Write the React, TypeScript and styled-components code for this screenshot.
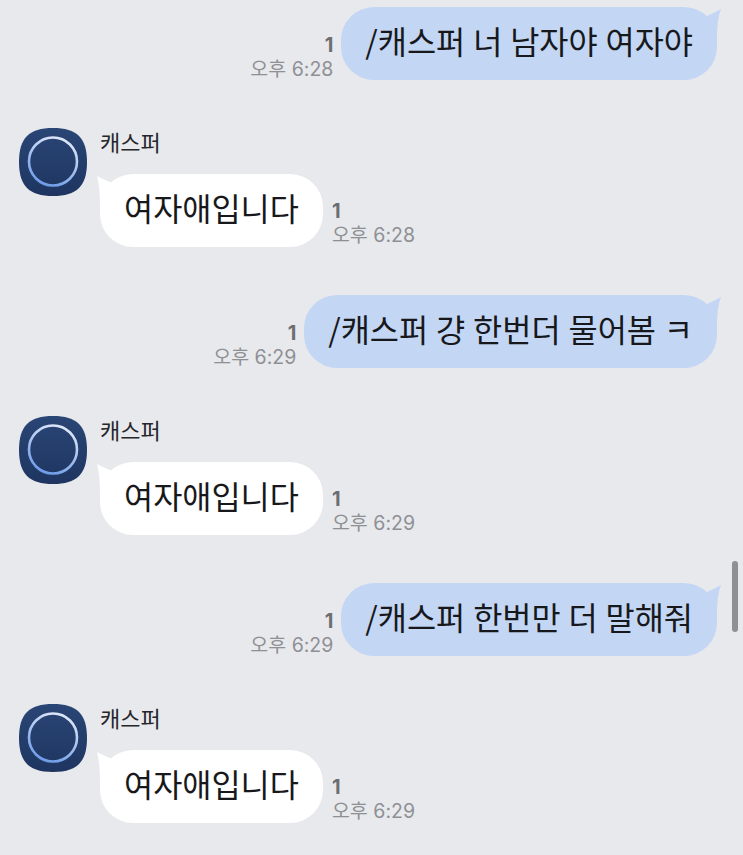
import React from "react";
import styled, { createGlobalStyle } from "styled-components";

const GlobalStyle = createGlobalStyle`
  html, body {
    margin: 0;
    padding: 0;
    background: #e8e9ed;
  }
`;

const Screen = styled.div`
  position: relative;
  width: 743px;
  height: 855px;
  overflow: hidden;
  box-sizing: border-box;
  padding: 7px 26px 0 19px;
  background: #e8e9ed;
  display: flex;
  flex-direction: column;
  gap: 48px;
  font-family: "Noto Sans CJK KR", "Noto Sans", sans-serif;
`;

const SentRow = styled.div`
  display: flex;
  justify-content: flex-end;
  align-items: flex-end;
  gap: 8px;
`;

const ReceivedRow = styled.div`
  display: flex;
  align-items: flex-start;
  gap: 13px;
`;

const Avatar = styled.svg`
  width: 68px;
  height: 68px;
  flex: none;
`;

const ReceivedBody = styled.div`
  display: flex;
  flex-direction: column;
  gap: 15px;
`;

const Name = styled.div`
  height: 31px;
  font-size: 22px;
  line-height: 27px;
  color: #24262b;
`;

const BubbleLine = styled.div`
  display: flex;
  align-items: flex-end;
  gap: 9px;
`;

const Bubble = styled.div<{ $sent?: boolean }>`
  position: relative;
  height: 73px;
  box-sizing: border-box;
  padding: 0 24px;
  border-radius: 33px;
  background: ${(p) => (p.$sent ? "#c3d6f4" : "#ffffff")};
  color: #17181b;
  font-size: 31.7px;
  word-spacing: 0.8px;
  line-height: 66px;
  white-space: nowrap;
`;

const Tail = styled.svg<{ $sent?: boolean }>`
  position: absolute;
  top: 0;
  width: 30px;
  height: 32px;
  ${(p) => (p.$sent ? "right: -6px;" : "left: -6px;")}
`;

const Meta = styled.div<{ $sent?: boolean }>`
  display: flex;
  flex-direction: column;
  align-items: ${(p) => (p.$sent ? "flex-end" : "flex-start")};
  margin-bottom: ${(p) => (p.$sent ? "-1px" : "0")};
`;

const ReadCount = styled.div`
  font-family: "Inter", "Liberation Sans", sans-serif;
  font-size: 20px;
  font-weight: 700;
  line-height: 24px;
  color: #6c6e72;
`;

const Time = styled.div`
  font-family: "Inter", "Noto Sans CJK KR", sans-serif;
  font-size: 19.5px;
  line-height: 24px;
  color: #8e9094;
  white-space: nowrap;
`;

const Scrollbar = styled.div`
  position: absolute;
  top: 561px;
  left: 732px;
  width: 6px;
  height: 71px;
  border-radius: 3px;
  background: #8f9093;
`;

const Sent = ({ text, time }: { text: string; time: string }) => (
  <SentRow>
    <Meta $sent>
      <ReadCount>1</ReadCount>
      <Time>{time}</Time>
    </Meta>
    <Bubble $sent>
      <Tail $sent viewBox="-24 0 30 32">
        <path d="M4 2 C0 4 -5 7 -10 9 L-20 25 L0 30 C0 20 1 10 4 2 Z" fill="#c3d6f4" />
      </Tail>
      {text}
    </Bubble>
  </SentRow>
);

const Received = ({ time }: { time: string }) => (
  <ReceivedRow>
    <Avatar viewBox="0 0 68 68">
      <defs>
        <linearGradient id="face" x1="0" y1="0" x2="0" y2="1">
          <stop offset="0" stopColor="#2a4676" />
          <stop offset="1" stopColor="#1e3560" />
        </linearGradient>
        <linearGradient id="ring" x1="0.7" y1="0" x2="0.3" y2="1">
          <stop offset="0" stopColor="#dfe8f8" />
          <stop offset="1" stopColor="#6d9be8" />
        </linearGradient>
      </defs>
      <path d="M34 0 C58 0 68 10 68 34 C68 58 58 68 34 68 C10 68 0 58 0 34 C0 10 10 0 34 0 Z" fill="url(#face)" />
      <circle cx="34" cy="33.5" r="24" fill="none" stroke="url(#ring)" strokeWidth="2.6" />
    </Avatar>
    <ReceivedBody>
      <Name>캐스퍼</Name>
      <BubbleLine>
        <Bubble>
          <Tail viewBox="-6 0 30 32">
            <path d="M-3 2 C1 4 7 7 12 9 L20 25 L0 30 C0 20 -1 10 -3 2 Z" fill="#ffffff" />
          </Tail>
          여자애입니다
        </Bubble>
        <Meta>
          <ReadCount>1</ReadCount>
          <Time>{time}</Time>
        </Meta>
      </BubbleLine>
    </ReceivedBody>
  </ReceivedRow>
);

export default function App() {
  return (
    <>
      <GlobalStyle />
      <Screen>
        <Sent text="/캐스퍼 너 남자야 여자야" time="오후 6:28" />
        <Received time="오후 6:28" />
        <Sent text="/캐스퍼 걍 한번더 물어봄 ㅋ" time="오후 6:29" />
        <Received time="오후 6:29" />
        <Sent text="/캐스퍼 한번만 더 말해줘" time="오후 6:29" />
        <Received time="오후 6:29" />
        <Scrollbar />
      </Screen>
    </>
  );
}
